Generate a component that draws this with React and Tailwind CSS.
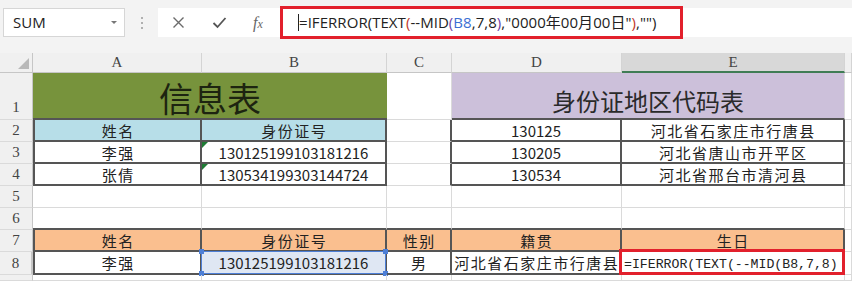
import React from 'react';

const cjk = "font-['Noto_Sans_CJK_SC',sans-serif]";
const serif = "font-['Liberation_Serif','Noto_Sans_CJK_SC',serif]";

// plain gridline cell
const grid = 'border-r border-b border-[#dadada]';
// cell inside a bordered table
const dark = 'border-r-2 border-b-2 border-[#555555]';
const darkL = 'border-l-2 border-r-2 border-b-2 border-[#555555]';

function Cell({ className = '', children }) {
  return (
    <div className={`relative flex items-center justify-center whitespace-nowrap leading-none text-[#222] ${className}`}>
      {children}
    </div>
  );
}

function RowHead({ n, className = '' }) {
  return (
    <div className={`flex items-center justify-center bg-[#f0f0f0] border-r border-b border-r-[#c6c6c6] border-b-[#dadada] text-[15px] text-[#444] leading-none ${serif} ${className}`}>
      {n}
    </div>
  );
}

function ColHead({ l, className = 'bg-[#f0f0f0] border-b border-b-[#c6c6c6]' }) {
  return (
    <div className={`flex items-center justify-center border-r border-r-[#d4d4d4] text-[15px] text-[#444] leading-none ${serif} ${className}`}>
      {l}
    </div>
  );
}

const Txt = ({ children }) => <span className={`${cjk} text-[15px] tracking-[1.5px] pl-[1.5px]`}>{children}</span>;
const Num = ({ children }) => <span className={`${cjk} text-[15px]`}>{children}</span>;

const GreenTick = () => (
  <div className="absolute left-0 top-0 w-0 h-0 border-t-[6px] border-r-[6px] border-t-[#1e7b34] border-r-transparent" />
);

export default function App() {
  return (
    <div className="w-[852px] h-[281px] overflow-hidden bg-white">
      {/* formula bar */}
      <div className="h-[53px] bg-[#f3f3f3] flex items-center pb-[9px] pt-[1px]">
        <div className="ml-[3px] w-[122px] h-[29px] bg-white border border-[#d6d6d6] flex items-center justify-between pl-[9px] pr-[7px]">
          <span className="font-['Open_Sans',sans-serif] text-[15px] text-[#222]">SUM</span>
          <span className="w-0 h-0 border-l-[3px] border-r-[3px] border-t-[3px] border-l-transparent border-r-transparent border-t-[#777]" />
        </div>
        <div className="w-[33px] flex flex-col items-center gap-[3px]">
          <span className="w-[2px] h-[2px] bg-[#b0b0b0]" />
          <span className="w-[2px] h-[2px] bg-[#b0b0b0]" />
          <span className="w-[2px] h-[2px] bg-[#b0b0b0]" />
        </div>
        <div className="flex-1 h-[29px] bg-white flex items-center">
          <div className="w-[122px] flex items-center">
            <svg className="ml-[14px]" width="13" height="13" viewBox="0 0 13 13">
              <path d="M1.5 1.5 L11.5 11.5 M11.5 1.5 L1.5 11.5" stroke="#6b6b6b" strokeWidth="1.4" fill="none" />
            </svg>
            <svg className="ml-[27px]" width="15" height="13" viewBox="0 0 15 13">
              <path d="M1.5 7 L5.5 11 L13.5 2" stroke="#555" strokeWidth="1.8" fill="none" />
            </svg>
            <span className="ml-[26px] font-['Liberation_Serif',serif] italic text-[16px] text-[#666]">
              f<span className="text-[12px]">x</span>
            </span>
          </div>
          <div className="w-[403px] h-[33px] border-[3px] border-[#e2202c] flex items-center pl-[15px]">
            <span className="w-px h-[17px] bg-[#222]" />
            <span className="font-['Open_Sans','Noto_Sans_CJK_SC',sans-serif] text-[15px] text-[#222] tracking-[0.05px]">
              =IFERROR(TEXT<span className="text-[#c0392b]">(</span>--MID<span className="text-[#6a3fa8]">(</span>
              <span className="text-[#3b6fd4]">B8</span>,7,8<span className="text-[#6a3fa8]">)</span>,"0000年00月00日"
              <span className="text-[#c0392b]">)</span>,"")
            </span>
          </div>
        </div>
      </div>

      {/* sheet */}
      <div className="grid grid-cols-[33px_169px_185px_65px_170px_223px_1fr] grid-rows-[20px_47px_22px_22px_22px_22px_22px_22px_23px_1fr] h-[228px]">
        {/* header row */}
        <div className="relative bg-[#f0f0f0] border-r border-b border-[#c6c6c6]">
          <div className="absolute right-[3px] bottom-[3px] w-0 h-0 border-b-[11px] border-l-[11px] border-b-[#b9b9b9] border-l-transparent" />
        </div>
        <ColHead l="A" />
        <ColHead l="B" />
        <ColHead l="C" />
        <ColHead l="D" />
        <ColHead l="E" className="bg-[#d8d8d8] border-b-2 border-b-[#3f7d55] text-[#2f6b45]" />
        <ColHead l="" />

        {/* row 1 */}
        <RowHead n="1" className="items-end pb-[4px]" />
        <Cell className="col-span-2 bg-[#77933c] border-b-2 border-b-[#555555] pt-[4px]">
          <span className={`${cjk} text-[34px] text-[#1d2410]`}>信息表</span>
        </Cell>
        <Cell className={grid} />
        <Cell className="col-span-2 bg-[#ccc0da] border-b-2 border-b-[#555555] border-r border-r-[#dadada] pt-[10px]">
          <span className={`${cjk} text-[24px] text-[#2a2a2a]`}>身份证地区代码表</span>
        </Cell>
        <Cell className={grid} />

        {/* row 2 */}
        <RowHead n="2" />
        <Cell className={`${darkL} bg-[#b7dee8]`}><Txt>姓名</Txt></Cell>
        <Cell className={`${dark} bg-[#b7dee8]`}><Txt>身份证号</Txt></Cell>
        <Cell className="border-r-2 border-r-[#555555] border-b border-b-[#dadada]" />
        <Cell className={dark}><Num>130125</Num></Cell>
        <Cell className={dark}><Txt>河北省石家庄市行唐县</Txt></Cell>
        <Cell className={grid} />

        {/* row 3 */}
        <RowHead n="3" />
        <Cell className={darkL}><Txt>李强</Txt></Cell>
        <Cell className={dark}><GreenTick /><Num>130125199103181216</Num></Cell>
        <Cell className="border-r-2 border-r-[#555555] border-b border-b-[#dadada]" />
        <Cell className={dark}><Num>130205</Num></Cell>
        <Cell className={dark}><Txt>河北省唐山市开平区</Txt></Cell>
        <Cell className={grid} />

        {/* row 4 */}
        <RowHead n="4" />
        <Cell className={darkL}><Txt>张倩</Txt></Cell>
        <Cell className={dark}><GreenTick /><Num>130534199303144724</Num></Cell>
        <Cell className="border-r-2 border-r-[#555555] border-b border-b-[#dadada]" />
        <Cell className={dark}><Num>130534</Num></Cell>
        <Cell className={dark}><Txt>河北省邢台市清河县</Txt></Cell>
        <Cell className={grid} />

        {/* row 5 */}
        <RowHead n="5" />
        <Cell className={grid} />
        <Cell className={grid} />
        <Cell className={grid} />
        <Cell className={grid} />
        <Cell className={grid} />
        <Cell className={grid} />

        {/* row 6 */}
        <RowHead n="6" />
        <Cell className="border-r border-r-[#dadada] border-b-2 border-b-[#555555]" />
        <Cell className="border-r border-r-[#dadada] border-b-2 border-b-[#555555]" />
        <Cell className="border-r border-r-[#dadada] border-b-2 border-b-[#555555]" />
        <Cell className="border-r border-r-[#dadada] border-b-2 border-b-[#555555]" />
        <Cell className="border-r border-r-[#dadada] border-b-2 border-b-[#555555]" />
        <Cell className={grid} />

        {/* row 7 */}
        <RowHead n="7" />
        <Cell className={`${darkL} bg-[#fabf8f]`}><Txt>姓名</Txt></Cell>
        <Cell className={`${dark} bg-[#fabf8f]`}><Txt>身份证号</Txt></Cell>
        <Cell className={`${dark} bg-[#fabf8f]`}><Txt>性别</Txt></Cell>
        <Cell className={`${dark} bg-[#fabf8f]`}><Txt>籍贯</Txt></Cell>
        <Cell className={`${dark} bg-[#fabf8f]`}><Txt>生日</Txt></Cell>
        <Cell className={grid} />

        {/* row 8 */}
        <RowHead n="8" className="bg-[#d8d8d8] border-r-2 border-r-[#3f7d55] text-[#2f6b45]" />
        <Cell className={darkL}><Txt>李强</Txt></Cell>
        <Cell className={`${dark} bg-[#dfe7f3]`}>
          <div className="absolute -left-px -top-px right-[-1px] bottom-[-1px] border-[1.5px] border-[#4d7fd6]" />
          <div className="absolute -left-[3px] -top-[3px] w-[5px] h-[5px] bg-[#4d7fd6]" />
          <div className="absolute -right-[3px] -top-[3px] w-[5px] h-[5px] bg-[#4d7fd6]" />
          <div className="absolute -left-[3px] -bottom-[3px] w-[5px] h-[5px] bg-[#4d7fd6]" />
          <div className="absolute -right-[3px] -bottom-[3px] w-[5px] h-[5px] bg-[#4d7fd6]" />
          <Num>130125199103181216</Num>
        </Cell>
        <Cell className={dark}><Txt>男</Txt></Cell>
        <Cell className={dark}><Txt>河北省石家庄市行唐县</Txt></Cell>
        <Cell className={`${dark} justify-start`}>
          <div className="overflow-hidden w-full pl-[2px]">
            <span className="font-['Liberation_Mono',monospace] text-[13.2px] text-[#222]">=IFERROR(TEXT(--MID(B8,7,8)</span>
          </div>
          <div className="absolute z-10 -left-[3px] -top-[3px] -right-[2px] -bottom-[2px] border-[3px] border-[#e2202c]" />
        </Cell>
        <Cell className={grid} />

        {/* row 9 (only its top edge is on screen) */}
        <RowHead n="" />
        <Cell className={grid} />
        <Cell className={grid} />
        <Cell className={grid} />
        <Cell className={grid} />
        <Cell className={grid} />
        <Cell className={grid} />
      </div>
    </div>
  );
}
